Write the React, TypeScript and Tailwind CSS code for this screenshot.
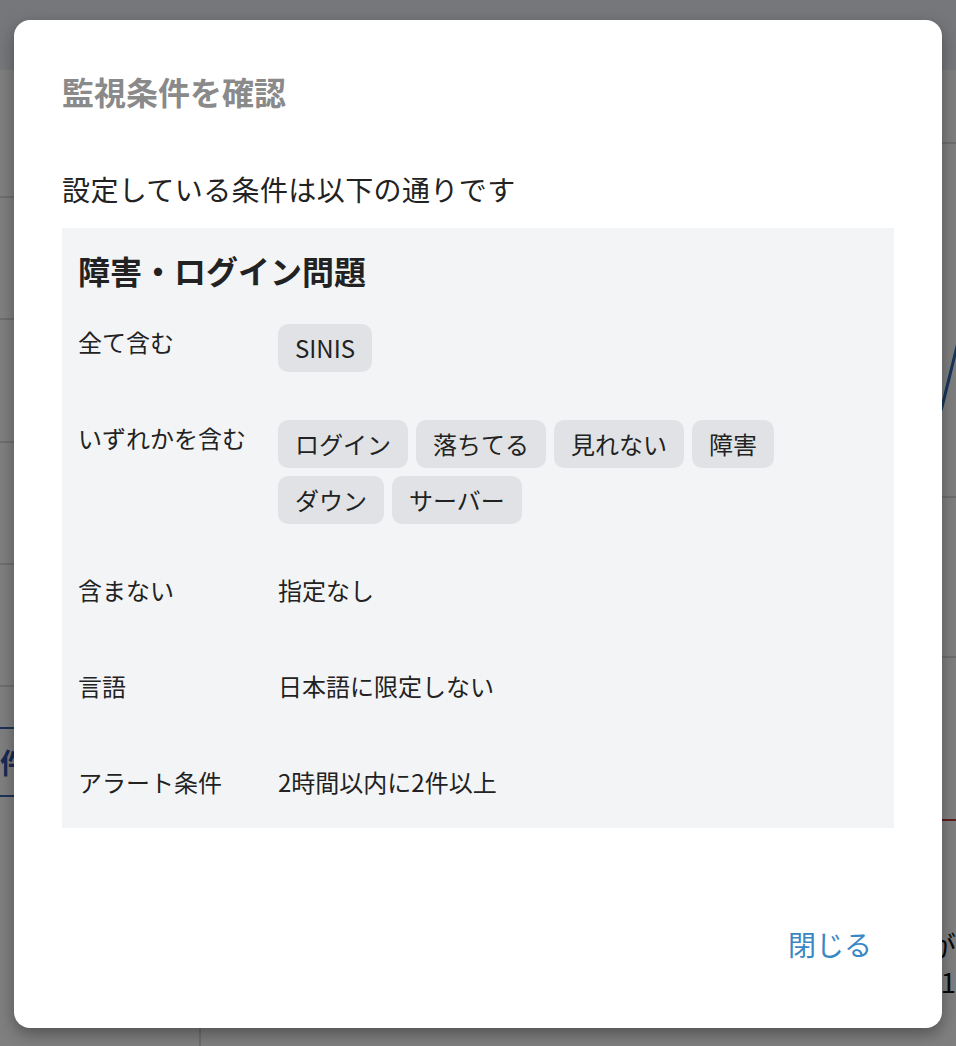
import React from 'react';

const font = { fontFamily: '"Noto Sans CJK JP", "Noto Sans", sans-serif' };

type Condition = {
  label: string;
  tags?: string[];
  text?: string;
};

const conditions: Condition[] = [
  { label: '全て含む', tags: ['SINIS'] },
  { label: 'いずれかを含む', tags: ['ログイン', '落ちてる', '見れない', '障害', 'ダウン', 'サーバー'] },
  { label: '含まない', text: '指定なし' },
  { label: '言語', text: '日本語に限定しない' },
  { label: 'アラート条件', text: '2時間以内に2件以上' },
];

const Tag: React.FC<{ children: React.ReactNode }> = ({ children }) => (
  <span className="rounded-[10px] bg-[#e1e2e5] px-[17px] py-2 text-[24px] leading-8 text-[#222]">
    {children}
  </span>
);

// page behind the dialog, dimmed by the overlay
const BackgroundPage: React.FC = () => (
  <div className="flex h-[1046px] flex-col bg-white">
    <div className="h-[70px] shrink-0 bg-[#eceef4]" />
    <div className="flex flex-1">
      <div className="flex w-[201px] shrink-0 flex-col border-r-2 border-[#dcdcdc]">
        <div className="h-[128px] border-b-2 border-[#dcdcdc]" />
        <div className="h-[122px] border-b-2 border-[#dcdcdc]" />
        <div className="h-[123px] border-b-2 border-[#dcdcdc]" />
        <div className="h-[122px] border-b-2 border-[#dcdcdc]" />
        <div className="h-[122px] border-b-2 border-[#dcdcdc]" />
        <div className="mt-[40px] flex h-[70px] items-center border-y-2 border-[#3a64b0] text-[28px] font-bold text-[#2f56a8]">
          件数
        </div>
      </div>
      <div className="flex flex-1 flex-col">
        <svg className="h-[837px] w-full" viewBox="0 0 755 837" preserveAspectRatio="none">
          <line x1="0" y1="73" x2="755" y2="73" stroke="#dcdcdc" strokeWidth="2" />
          <line x1="0" y1="427" x2="755" y2="427" stroke="#dcdcdc" strokeWidth="2" />
          <line x1="0" y1="587" x2="755" y2="587" stroke="#dcdcdc" strokeWidth="2" />
          <line x1="0" y1="750" x2="755" y2="750" stroke="#c43c3c" strokeWidth="2" />
          <polyline points="600,650 680,500 741,337 760,260" fill="none" stroke="#2c6bb5" strokeWidth="3" />
        </svg>
        <div className="flex flex-1 justify-end overflow-hidden">
          <div className="flex w-[14px] flex-col items-end overflow-hidden whitespace-nowrap pt-[20px] text-[28px] leading-9 text-[#111]">
            <span>が</span>
            <span>1.1</span>
          </div>
        </div>
      </div>
    </div>
  </div>
);

const App: React.FC = () => {
  return (
    <div className="relative h-[1046px] w-full overflow-hidden" style={font}>
      <BackgroundPage />
      <div className="absolute inset-0 bg-black/50" />

      <div className="absolute inset-0 flex justify-center px-[14px] pt-5">
        <div className="h-[1008px] w-full rounded-2xl bg-white px-12 pt-[51px] shadow-[0_6px_16px_rgba(0,0,0,0.35)]">
          <h2 className="text-[32px] font-bold leading-10 text-[#8a8a8a]">監視条件を確認</h2>

          <p className="mt-[60px] text-[28px] leading-9 tracking-[0.4px] text-[#222]">設定している条件は以下の通りです</p>

          <div className="mt-[21px] bg-[#f3f4f6] px-4 pb-4 pt-[22px]">
            <h3 className="text-[32px] font-bold leading-10 text-[#222]">障害・ログイン問題</h3>

            <div className="mt-[34px] flex flex-col gap-12">
              {conditions.map((c) => (
                <div key={c.label} className="flex min-h-12 items-start">
                  <div className="w-[200px] shrink-0 text-[24px] leading-9 text-[#222]">{c.label}</div>
                  {c.tags ? (
                    <div className="flex flex-1 flex-wrap gap-2">
                      {c.tags.map((t) => (
                        <Tag key={t}>{t}</Tag>
                      ))}
                    </div>
                  ) : (
                    <div className="flex-1 text-[24px] leading-9 text-[#222]">{c.text}</div>
                  )}
                </div>
              ))}
            </div>
          </div>

          <div className="mt-[90px] flex justify-end">
            <button className="py-2 pl-6 pr-[22px] text-[28px] leading-9 text-[#3a87c5]">閉じる</button>
          </div>
        </div>
      </div>
    </div>
  );
};

export default App;
